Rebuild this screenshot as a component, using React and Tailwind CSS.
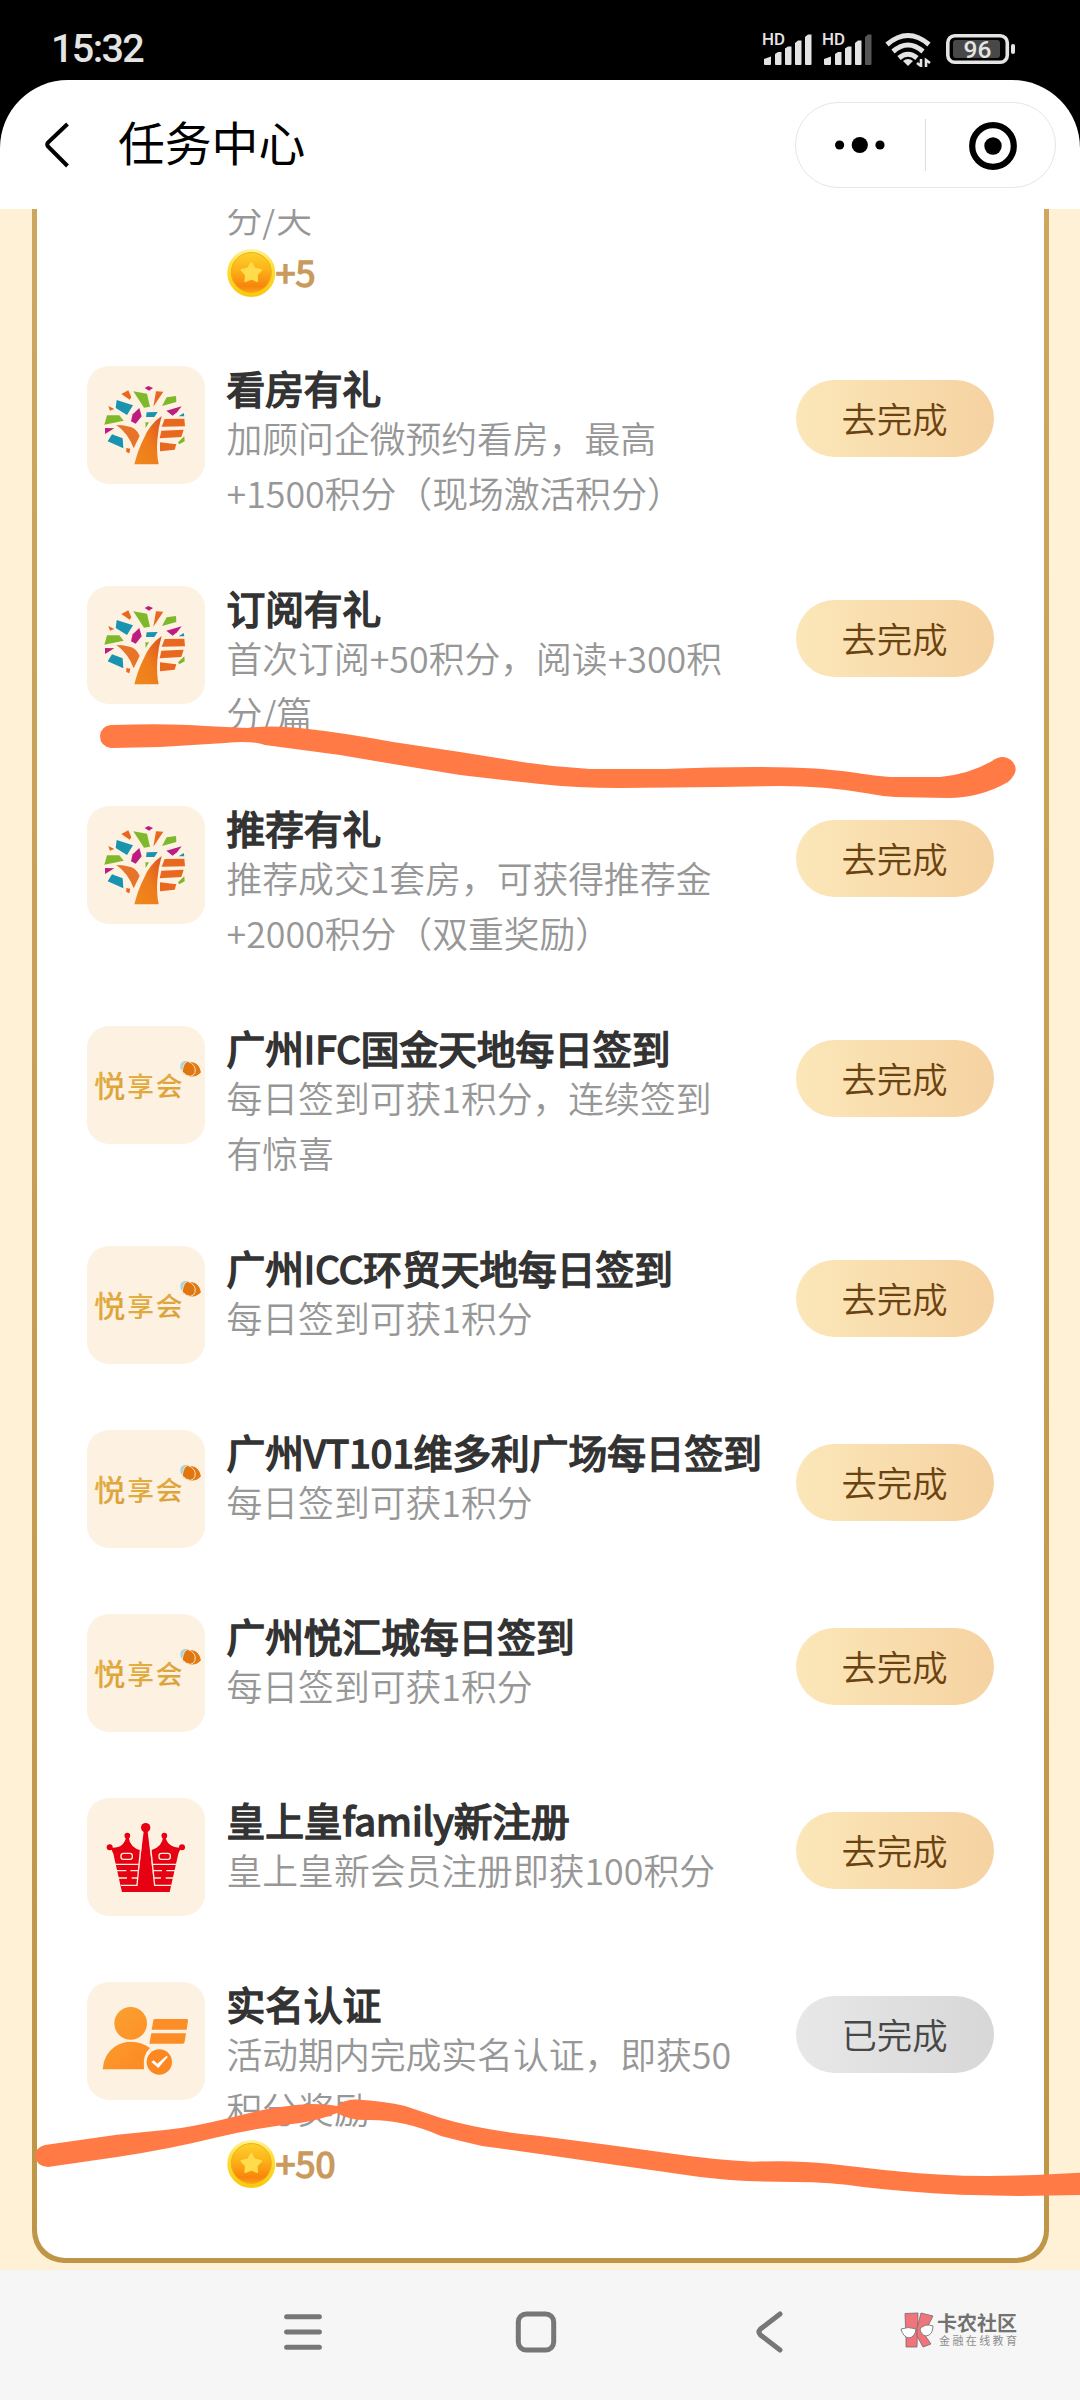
import React from 'react';

const tasks = [
    { id: 1, icon: 'tree', title: '看房有礼', lines: ['加顾问企微预约看房，最高', '+1500积分（现场激活积分）'] },
    { id: 2, icon: 'tree', title: '订阅有礼', lines: ['首次订阅+50积分，阅读+300积', '分/篇'] },
    { id: 3, icon: 'tree', title: '推荐有礼', lines: ['推荐成交1套房，可获得推荐金', '+2000积分（双重奖励）'] },
    { id: 4, icon: 'yue', title: '广州IFC国金天地每日签到', lines: ['每日签到可获1积分，连续签到', '有惊喜'] },
    { id: 5, icon: 'yue', title: '广州ICC环贸天地每日签到', lines: ['每日签到可获1积分'] },
    { id: 6, icon: 'yue', title: '广州VT101维多利广场每日签到', lines: ['每日签到可获1积分'] },
    { id: 7, icon: 'yue', title: '广州悦汇城每日签到', lines: ['每日签到可获1积分'] },
    { id: 8, icon: 'crown', title: '皇上皇family新注册', lines: ['皇上皇新会员注册即获100积分'] },
    { id: 9, icon: 'person', title: '实名认证', lines: ['活动期内完成实名认证，即获50', '积分奖励'], reward: '+50', done: true },
];

const TreeIcon = () => (
    <svg viewBox="20 17 354 354" className="w-full h-full">
        <defs>
            <linearGradient id="trunk" x1="0" y1="1" x2="1" y2="0">
                <stop offset="0" stopColor="#f08a1c" />
                <stop offset="0.5" stopColor="#ee7c1c" />
                <stop offset="1" stopColor="#dc5220" />
            </linearGradient>
        </defs>
        <path d="M244 167 Q207 193 190 235 Q173 268 162 312 H235 Q228 280 231 240 Q233 205 244 167Z" fill="url(#trunk)" />
        <path d="M108 194 Q147 195 163 206 Q175 216 178 227 L160 264 Q143 218 108 194Z" fill="#e8742a" />
        <g fill="#e8681f">
            <path d="M253 176 L312 175 L314 198 L244 199Z" />
            <path d="M243 211 L310 208 L303 230 L238 234Z" />
            <path d="M239 246 L288 252 L283 268 L239 273Z" />
            <path d="M123 101 L144 90 L153 111 L148 118Z" />
            <path d="M227 93 L249 94 L229 124 L219 139Z" />
            <path d="M84 137 L102 146 L89 151Z" />
            <path d="M138 263 L150 265 L147 279 L138 275Z" />
        </g>
        <g fill="#7fb82b">
            <path d="M159 93 L200 100 L209 139 L191 142Z" />
            <path d="M259 111 L287 107 L288 125 L245 137Z" />
            <path d="M80 165 L117 165 L130 181 L72 193Z" />
            <path d="M195 186 L206 186 L196 203Z" />
            <path d="M312 228 L313 243 L297 252 L293 246Z" />
        </g>
        <g fill="#1893b0">
            <path d="M109 119 L158 135 L140 164 L106 143Z" />
            <path d="M199 156 L232 155 L222 170 L197 170Z" />
            <path d="M95 222 L127 234 L129 264 L82 243Z" />
            <path d="M310 158 L312 168 L295 168Z" />
        </g>
        <g fill="#bd1d80">
            <path d="M177 143 L184 168 L166 190 L152 183 L157 162Z" />
            <path d="M258 151 L304 138 L290 156 L277 166Z" />
            <path d="M193 83 L204 77 L218 83 L206 91Z" />
            <path d="M74 203 L102 204 L74 221Z" />
        </g>
    </svg>
);

const YueIcon = () => (
    <svg viewBox="52 47 354 354" className="w-full h-full">
        <defs>
            <linearGradient id="gold" x1="0" y1="0" x2="1" y2="1">
                <stop offset="0" stopColor="#e6b34a" />
                <stop offset="1" stopColor="#d99d33" />
            </linearGradient>
        </defs>
        <text x="73" y="259" fontSize="90" fontWeight="500" textLength="94" lengthAdjust="spacingAndGlyphs" fill="url(#gold)" fontFamily="Noto Sans CJK SC, sans-serif">悦</text>
        <text x="173" y="257" fontSize="80" fontWeight="500" letterSpacing="5" fill="url(#gold)" fontFamily="Noto Sans CJK SC, sans-serif">享会</text>
        <path d="M333 177 Q327 155 347 151 L354 153 Q340 160 343 187Z" fill="#a7d5dc" />
        <path d="M342 190 Q342 156 365 155 Q389 158 394 186 Q381 201 361 198Z" fill="#e17a12" />
        <path d="M338 184 Q340 158 354 153 Q381 163 376 186 Q373 196 362 198 Q349 197 338 184Z" fill="#e07612" stroke="#fbe1bd" strokeWidth="3" />
    </svg>
);

const CrownIcon = () => (
    <svg viewBox="52 57 354 354" className="w-full h-full">
        <g fill="#e60012">
            <circle cx="228" cy="146" r="14" />
            <circle cx="173" cy="170" r="8.5" />
            <circle cx="284" cy="170" r="8.5" />
            <circle cx="120" cy="205" r="9" />
            <circle cx="337" cy="205" r="9" />
            <path d="M120 206 Q163 211 170 172 H176 Q181 207 213 214 L204 317 H252 L244 214 Q277 206 281 172 H287 Q293 208 337 206 Q328 213 326 224 L300 339 H157 L131 224 Q128 212 120 206Z" />
            <path d="M223 150 H233 L254 320 H202Z" />
        </g>
        <g stroke="#fdf0df" strokeWidth="4" fill="none">
            <path d="M215 186 L202 319 H154 M241 186 L255 319 H304" />
            <rect x="154" y="223" width="34" height="18" rx="7" />
            <rect x="268" y="223" width="34" height="18" rx="7" />
            <path d="M134 256 H207 M249 256 H322 M141 275 H170 M182 275 H206 M250 275 H277 M290 275 H318 M146 297 H172 M186 297 H204 M252 297 H274 M288 297 H314" />
        </g>
    </svg>
);

const PersonIcon = () => (
    <svg viewBox="52 608 354 354" className="w-full h-full">
        <defs>
            <linearGradient id="orange" gradientUnits="userSpaceOnUse" x1="100" y1="690" x2="260" y2="860">
                <stop offset="0" stopColor="#fba232" />
                <stop offset="1" stopColor="#fd8822" />
            </linearGradient>
        </defs>
        <circle cx="183" cy="732" r="49" fill="url(#orange)" />
        <path d="M99 870 Q102 825 135 802 Q158 787 184 787 Q218 788 241 806 Q218 826 223 870Z" fill="url(#orange)" />
        <path d="M256 719 H351 Q356 719 355 724 L351 751 H246 L251 723 Q252 719 256 719Z" fill="#fd8d26" />
        <path d="M245 762 H349 L345 787 Q344 793 338 793 H239Z" fill="#fd8d26" />
        <circle cx="269" cy="848" r="38" fill="#fd8822" />
        <path d="M245 848 L252 843 L263 853 L291 829 L294 833 L266 866Z" fill="#fff" />
    </svg>
);

const Coin = () => (
    <svg viewBox="0 0 48 48" className="w-12 h-12">
        <defs>
            <linearGradient id="coinRim" x1="0" y1="0" x2="0" y2="1">
                <stop offset="0" stopColor="#fff3a0" />
                <stop offset="0.3" stopColor="#ffe040" />
                <stop offset="1" stopColor="#fac80c" />
            </linearGradient>
            <linearGradient id="coinFace" x1="0" y1="0" x2="0" y2="1">
                <stop offset="0" stopColor="#fcd22c" />
                <stop offset="0.45" stopColor="#fcb018" />
                <stop offset="0.85" stopColor="#f8840c" />
                <stop offset="1" stopColor="#fba01c" />
            </linearGradient>
        </defs>
        <circle cx="24.3" cy="24" r="24" fill="url(#coinRim)" />
        <circle cx="24.3" cy="23.5" r="20" fill="url(#coinFace)" stroke="#f0b010" strokeWidth="1" />
        <path d="M24.3 14 L27.5 19.6 L34 21 L29.6 25.8 L30.2 32 L24.3 29.6 L18.4 32 L19 25.8 L14.6 21 L21.1 19.6Z" fill="#ffdc4c" stroke="#ffdc4c" strokeWidth="2" strokeLinejoin="round" />
    </svg>
);

const icons = { tree: TreeIcon, yue: YueIcon, crown: CrownIcon, person: PersonIcon };

const Reward = ({ value }) => (
    <div className="flex items-center h-[55px]">
        <Coin />
        <span className="ml-px mb-0.5 text-[36px] leading-[53px] text-[#c99a5b] [-webkit-text-stroke:1.5px_#c99a5b]">{value}</span>
    </div>
);

const TaskRow = ({ task }) => {
    const Icon = icons[task.icon];
    return (
        <div className="flex items-start">
            <div className="w-[118px] h-[118px] shrink-0 rounded-[22px] bg-[#fdf1e2] overflow-hidden">
                <Icon />
            </div>
            <div className="ml-[22px] w-[569px] shrink-0 whitespace-nowrap">
                <h2 className="mb-0.5 text-[38.7px] leading-[42px] font-normal text-[#333333] [-webkit-text-stroke:1.7px_#333333]">{task.title}</h2>
                {task.lines.map((line) => (
                    <p key={line} className="text-[35.8px] leading-[55px] font-[350] text-[#979797]">{line}</p>
                ))}
                {task.reward && <Reward value={task.reward} />}
            </div>
            <button
                className={`mt-3.5 w-[198px] h-[77px] pb-0.5 rounded-full text-[35.4px] leading-none font-[350] bg-linear-to-r ${task.done
                    ? 'from-[#e8e8e8] to-[#d7d7d7] text-[#474747]'
                    : 'from-[#fbe7b9] to-[#f6d2a1] text-[#6b4310]'}`}
            >
                {task.done ? '已完成' : '去完成'}
            </button>
        </div>
    );
};

const Signal = ({ weak }) => (
    <svg className="overflow-visible" width="50" height="34" viewBox="0 0 50 34">
        <text x="0" y="13" fontSize="16.5" fontWeight="500" textLength="23" lengthAdjust="spacingAndGlyphs" fill="#e4e4e4" fontFamily="Roboto, sans-serif">HD</text>
        <g fill="#e4e4e4">
            <path d="M2 27 L9 24.5 V32 Q9 33 8 33 H3 Q2 33 2 32Z" />
            <path d="M13 22 L16 20 H19.5 V32 Q19.5 33 18.5 33 H14 Q13 33 13 32Z" />
            <path d="M23 16.5 L26 14.5 H29.5 V32 Q29.5 33 28.5 33 H24 Q23 33 23 32Z" />
            <path d="M33 11 L36 8.5 H39.5 V32 Q39.5 33 38.5 33 H34 Q33 33 33 32Z" />
            <path d="M43 5 L46 2.5 H49.5 V32 Q49.5 33 48.5 33 H44 Q43 33 43 32Z" fill={weak ? '#555555' : '#e4e4e4'} />
        </g>
    </svg>
);

const StatusBar = () => (
    <div className="h-20 flex items-start justify-between pl-[51px] pr-[65px] bg-black">
        <span className="mt-[29px] font-[Roboto,sans-serif] text-[39.5px] leading-[40px] font-medium tracking-[-1.6px] text-[#e4e4e4]">15:32</span>
        <div className="mt-8 flex items-start">
            <Signal />
            <div className="ml-2.5"><Signal weak /></div>
            <svg className="ml-[13px]" width="46" height="35" viewBox="0 0 46 35">
                <g fill="none" stroke="#e4e4e4" strokeWidth="5">
                    <path d="M2 12.5 Q23 -5.5 44 12.5" />
                    <path d="M8 19.5 Q23 6.5 38 19.5" />
                    <path d="M14 26 Q23 18.5 32 26" />
                </g>
                <path d="M18 29 Q23 25 28 29 L23 34Z" fill="#e4e4e4" />
                <path d="M36 27 V34 L32 31 M41 35 V28 L45 31" fill="none" stroke="#e4e4e4" strokeWidth="2.6" />
            </svg>
            <svg className="ml-[15px]" width="69" height="34" viewBox="0 0 69 34">
                <rect x="1.8" y="3.8" width="59.5" height="26.5" rx="7" fill="none" stroke="#e4e4e4" strokeWidth="3.6" />
                <rect x="7" y="8" width="47" height="18" rx="3" fill="#484848" />
                <rect x="65" y="12" width="4" height="10" rx="2" fill="#e4e4e4" />
                <text x="31.5" y="26" textAnchor="middle" fontSize="24.5" fontWeight="500" fill="#e4e4e4" fontFamily="Roboto, sans-serif">96</text>
            </svg>
        </div>
    </div>
);

const Header = () => (
    <div className="bg-black">
        <header className="h-[129px] bg-white rounded-t-[68px] flex items-start pl-[45px] pr-6">
            <svg className="mt-[42px]" width="25" height="46" viewBox="0 0 25 46">
                <path d="M22.5 2 L3 20.5 Q1.5 22.5 3 24.5 L22.5 44" fill="none" stroke="#000" strokeWidth="4" />
            </svg>
            <h1 className="ml-12 mt-7 flex-1 text-[46.8px] leading-[66px] text-black">任务中心</h1>
            <div className="mt-[22px] w-[261px] h-[86px] rounded-full border border-[#e6e6e6] flex items-center">
                <svg className="ml-[39px]" width="50" height="18" viewBox="0 0 50 18">
                    <circle cx="4.6" cy="9" r="4.6" />
                    <circle cx="24.8" cy="9" r="8.1" />
                    <circle cx="45" cy="9" r="4.6" />
                </svg>
                <div className="ml-10 w-px h-[52px] bg-[#dedede]" />
                <svg className="ml-[43px] mt-0.5" width="48" height="48" viewBox="0 0 48 48">
                    <circle cx="24" cy="24" r="20.8" fill="none" stroke="#000" strokeWidth="6.2" />
                    <circle cx="24" cy="24" r="8.7" />
                </svg>
            </div>
        </header>
    </div>
);

const NavBar = () => (
    <nav className="h-[130px] bg-[#f6f6f6] flex items-start pl-[284px]">
        <svg className="mt-11" width="38" height="36" viewBox="0 0 38 36">
            <path d="M2.6 2.7 H35.4 M2.6 18 H35.4 M2.6 33.3 H35.4" stroke="#777" strokeWidth="5" strokeLinecap="round" />
        </svg>
        <svg className="ml-[193px] mt-[41px]" width="42" height="42" viewBox="0 0 42 42">
            <rect x="3.3" y="3" width="35.4" height="36" rx="8" fill="none" stroke="#777" strokeWidth="5" />
        </svg>
        <svg className="ml-[199px] mt-[41px]" width="27" height="42" viewBox="0 0 27 42">
            <path d="M24 3 L4.5 18 Q1.5 21 4.5 24 L24 39" fill="none" stroke="#777" strokeWidth="5" strokeLinecap="round" />
        </svg>
        <div className="ml-[117px] mt-[42px] flex items-start">
            <svg width="34" height="37" viewBox="0 0 34 37">
                <g fill="#f0747c" stroke="#77686a" strokeWidth="0.8">
                    <path d="M5 1.5 L18 1 L17 35 H6 L6 26Z" />
                    <path d="M17 16 L21 1 L33 4 L27 16 L22 19 L31 32 L23 35 L17 24Z" />
                </g>
                <path d="M1 17 Q8 14 16 17 Q15 25 9 26 Q3 25 1 17Z M20 17 Q25 11 33 14 Q33 23 26 24 Q21 23 20 17Z" fill="#fff" stroke="#777" strokeWidth="0.9" />
            </svg>
            <div className="ml-[3px] whitespace-nowrap">
                <p className="text-[20px] leading-[22px] font-bold text-[#727272]">卡农社区</p>
                <p className="ml-0.5 text-[11px] leading-[13px] tracking-[2.4px] text-[#8e8e8e]">金融在线教育</p>
            </div>
        </div>
    </nav>
);

// Hand-drawn marker strokes lying over the list
const Strokes = () => (
    <svg className="absolute inset-0 pointer-events-none" width="1080" height="2400" viewBox="0 0 1080 2400" fill="#ff7a45">
        <path d="M111 725 Q170 723 205 726 L247 728 Q270 725 300 728 Q345 733 393 742 L460 752 L510 760 Q550 767 590 769 L664 769 Q710 767 755 767 Q790 767 815 768.5 Q835 770 850 772 Q875 776 890 777 L940 777 Q970 774 992 761 Q1003 753 1012 761 Q1021 771 1008 782 Q980 798 948 798 L895 797 Q880 796 865 793 Q825 786 780 786 L720 787 L620 788 Q575 788 540 784 L460 775 L393 764 L340 755 L265 745 Q250 740 225 743 L160 747 L111 748 Q100 746 100 736 Q101 726 111 725Z" />
        <path d="M45 2145 L117 2134.7 L165 2130 Q195 2127 241 2115 Q280 2105 312 2104 Q329 2104 337 2106 Q345 2099 356 2099.5 Q385 2101 405 2106 L441 2118 Q480 2130 540 2136 L609 2145 L671 2153.5 Q715 2160 753 2161.7 Q795 2160 829 2163.7 L884 2170 Q940 2176 988 2176 L1036 2175 L1080 2172.7 V2195 L1020 2196 L960 2194.7 Q905 2192 863 2187 Q830 2182 795 2182 Q740 2182 700 2177 L609 2164 L540 2154 L482 2146 Q460 2141 441 2136 Q405 2120 370 2120 Q350 2121 337 2113 Q320 2120 300 2123 Q255 2128 214 2138 Q170 2149 117 2157 L48 2167 Q36 2166 35 2156 Q36 2147 45 2145Z" />
    </svg>
);

const App = () => (
    <div lang="zh-CN" className="relative w-[1080px] h-[2400px] overflow-hidden flex flex-col font-['Noto_Sans_CJK_SC',sans-serif]">
        <StatusBar />
        <Header />

        {/* Scrolled task list */}
        <main className="h-[2061px] overflow-hidden bg-[#fef1d6] px-8">
            <section className="w-[1017px] h-[2054px] rounded-b-[32px] bg-linear-to-b from-[#cda75f] to-[#bf9547] px-[5px] pb-[5px]">
                <div className="h-full rounded-b-[28px] bg-white pl-[49.5px] overflow-hidden">
                    <div className="-mt-[19px] mb-[66px] pl-[140px]">
                        <p className="text-[35.8px] leading-[55px] font-[350] text-[#979797]">分/天</p>
                        <Reward value="+5" />
                    </div>
                    <div className="flex flex-col gap-[66px]">
                        {tasks.map((task) => (
                            <TaskRow key={task.id} task={task} />
                        ))}
                    </div>
                </div>
            </section>
        </main>

        <NavBar />
        <Strokes />
    </div>
);

export default App;
